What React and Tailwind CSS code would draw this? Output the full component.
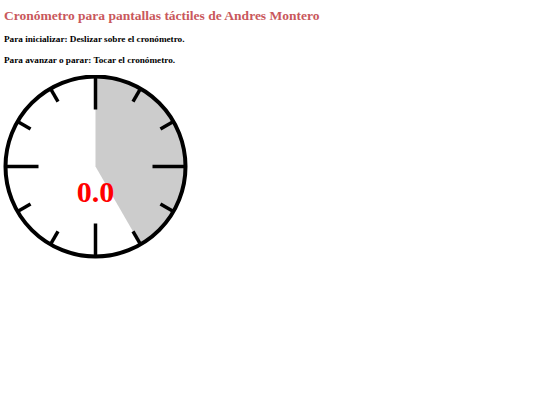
import React from 'react';

// 12 ticks around the dial; quarter marks are longer
const ticks = Array.from({ length: 12 }, (_, i) => i);

const Dial = ({ elapsed = 0 }) => {
    const cx = 95.5, cy = 166.5, r = 90;
    // shaded sector, 5/12 of a turn from 12 o'clock
    const a = (150 * Math.PI) / 180;
    const ex = cx + r * Math.sin(a);
    const ey = cy - r * Math.cos(a);
    return (
        <svg width="200" height="200" viewBox="0 75 200 200" className="block">
            <path d={`M ${cx} ${cy} L ${cx} ${cy - r} A ${r} ${r} 0 0 1 ${ex} ${ey} Z`} fill="#cccccc" />
            <circle cx={cx} cy={cy} r={r} fill="none" stroke="#000" strokeWidth="4" />
            {ticks.map((i) => {
                const t = (i * 30 * Math.PI) / 180;
                const inner = i % 3 === 0 ? 57 : 75;
                return (
                    <line
                        key={i}
                        x1={cx + inner * Math.sin(t)}
                        y1={cy - inner * Math.cos(t)}
                        x2={cx + r * Math.sin(t)}
                        y2={cy - r * Math.cos(t)}
                        stroke="#000"
                        strokeWidth="3.5"
                    />
                );
            })}
            <text x={cx} y="201.5" textAnchor="middle" fill="#ff0000" fontFamily="'Liberation Serif', serif" fontWeight="bold" fontSize="30">
                {elapsed.toFixed(1)}
            </text>
        </svg>
    );
};

export default function App() {
    return (
        <div className="min-h-screen bg-white px-1 pt-[8px] text-black" style={{ fontFamily: "'Liberation Serif', 'Times New Roman', serif" }}>
            <h1 className="text-[13.5px] font-bold leading-[16px] text-[#c9585c]">Cronómetro para pantallas táctiles de Andres Montero</h1>
            <p className="mt-[9px] text-[9.2px] font-bold leading-[12px]">Para inicializar: Deslizar sobre el cronómetro.</p>
            <p className="mt-[9px] text-[9.2px] font-bold leading-[12px]">Para avanzar o parar: Tocar el cronómetro.</p>
            <div className="-ml-1 mt-[9px]">
                <Dial elapsed={0} />
            </div>
        </div>
    );
}
